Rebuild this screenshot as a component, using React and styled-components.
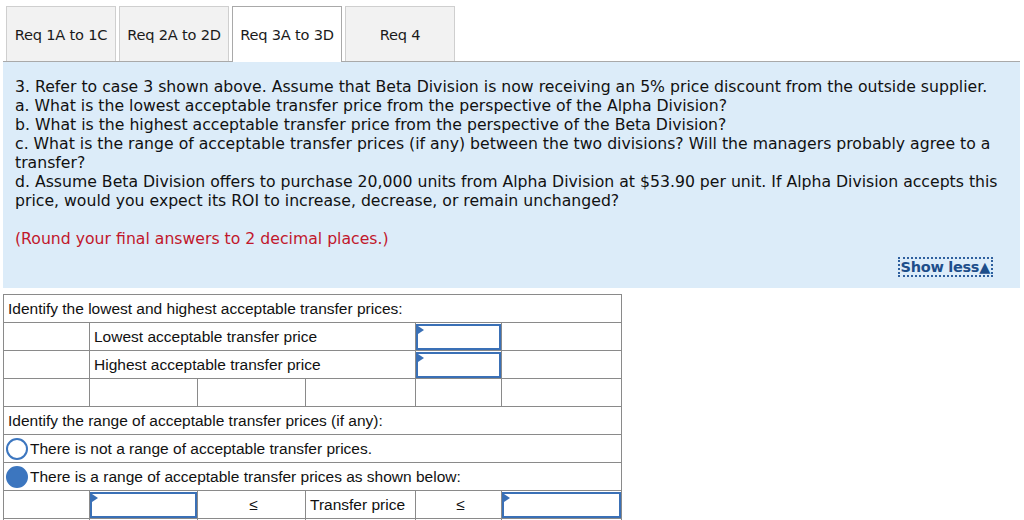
import React from "react";
import styled, { createGlobalStyle } from "styled-components";

const GlobalStyle = createGlobalStyle`
  body {
    margin: 0;
    background: #ffffff;
    font-family: "DejaVu Sans", Verdana, sans-serif;
    color: #111;
  }
`;

const Page = styled.div`
  padding: 6px 4px 0 3px;
`;

const TabBar = styled.div`
  display: flex;
  gap: 3px;
  padding-left: 3px;
  border-bottom: 1px solid #a9a9a9;
`;

const Tab = styled.div`
  width: 110px;
  box-sizing: border-box;
  display: flex;
  align-items: center;
  justify-content: center;
  font-size: 14.6px;
  letter-spacing: -0.2px;
  color: #1a1a1a;
  background: ${(props) => (props.active ? "#ffffff" : "#f2f2f2")};
  border: 1px solid ${(props) => (props.active ? "#a9a9a9" : "#cfcfcf")};
  border-bottom: none;
  margin-bottom: ${(props) => (props.active ? "-1px" : "0")};
  height: ${(props) => (props.active ? "56px" : "55px")};
`;

const Panel = styled.div`
  width: 1017px;
  box-sizing: border-box;
  background: #dcecf9;
  padding: 15px 27px 11px 12px;
  font-size: 15.7px;
  line-height: 19px;
`;

const Line = styled.div`
  white-space: nowrap;
`;

const Note = styled.div`
  margin-top: 19px;
  color: #c1172c;
`;

const ShowRow = styled.div`
  display: flex;
  justify-content: flex-end;
  margin-top: 9px;
`;

const ShowLess = styled.span`
  font-weight: bold;
  font-size: 14.5px;
  line-height: 16px;
  letter-spacing: -0.3px;
  color: #1d4e8a;
  border: 2px dotted #2e5f9e;
  padding: 0 1px;
`;

const Grid = styled.table`
  margin-top: 6px;
  border-collapse: collapse;
  table-layout: fixed;
  width: 618px;
  font-family: "Liberation Sans", Arial, sans-serif;
  font-size: 15.5px;
  line-height: 17px;
  color: #111;
`;

const Cell = styled.td`
  border: 1px solid #8a8a8a;
  height: 28px;
  padding: 0 0 0 4px;
  box-sizing: border-box;
  text-align: ${(props) => (props.center ? "center" : "left")};
  white-space: nowrap;
  overflow: hidden;
`;

const InputCell = styled.td`
  border: 1px solid #8a8a8a;
  height: 28px;
  padding: 0;
  box-sizing: border-box;
`;

const InputBox = styled.div`
  position: relative;
  height: 26px;
  box-sizing: border-box;
  border: 2px solid #3a70b6;
  background: #fff;
  &::before {
    content: "";
    position: absolute;
    left: 0;
    top: 0;
    border-top: 4px solid transparent;
    border-bottom: 4px solid transparent;
    border-left: 6px solid #3a70b6;
  }
`;

const RadioLine = styled.div`
  display: flex;
  align-items: center;
  gap: 2px;
  margin-left: -2px;
`;

const Radio = styled.span`
  width: 18px;
  height: 18px;
  border-radius: 50%;
  border: 2px solid #3c76bf;
  background: ${(props) => (props.checked ? "#3c76bf" : "#fff")};
  flex-shrink: 0;
`;

const Input = () => (
  <InputCell>
    <InputBox />
  </InputCell>
);

export default function App() {
  return (
    <Page>
      <GlobalStyle />
      <TabBar>
        <Tab>Req 1A to 1C</Tab>
        <Tab>Req 2A to 2D</Tab>
        <Tab active>Req 3A to 3D</Tab>
        <Tab>Req 4</Tab>
      </TabBar>
      <Panel>
        <Line>
          3. Refer to case 3 shown above. Assume that Beta Division is now receiving an 5% price
          discount from the outside supplier.
        </Line>
        <Line>a. What is the lowest acceptable transfer price from the perspective of the Alpha Division?</Line>
        <Line>b. What is the highest acceptable transfer price from the perspective of the Beta Division?</Line>
        <Line>
          c. What is the range of acceptable transfer prices (if any) between the two divisions? Will
          the managers probably agree to a
        </Line>
        <Line>transfer?</Line>
        <Line>
          d. Assume Beta Division offers to purchase 20,000 units from Alpha Division at $53.90 per
          unit. If Alpha Division accepts this
        </Line>
        <Line>price, would you expect its ROI to increase, decrease, or remain unchanged?</Line>
        <Note>(Round your final answers to 2 decimal places.)</Note>
        <ShowRow>
          <ShowLess>Show less▲</ShowLess>
        </ShowRow>
      </Panel>
      <Grid>
        <colgroup>
          <col style={{ width: 86 }} />
          <col style={{ width: 108 }} />
          <col style={{ width: 108 }} />
          <col style={{ width: 110 }} />
          <col style={{ width: 86 }} />
          <col style={{ width: 120 }} />
        </colgroup>
        <tbody>
          <tr>
            <Cell colSpan={6}>Identify the lowest and highest acceptable transfer prices:</Cell>
          </tr>
          <tr>
            <Cell />
            <Cell colSpan={3}>Lowest acceptable transfer price</Cell>
            <Input />
            <Cell />
          </tr>
          <tr>
            <Cell />
            <Cell colSpan={3}>Highest acceptable transfer price</Cell>
            <Input />
            <Cell />
          </tr>
          <tr>
            <Cell />
            <Cell />
            <Cell />
            <Cell />
            <Cell />
            <Cell />
          </tr>
          <tr>
            <Cell colSpan={6}>Identify the range of acceptable transfer prices (if any):</Cell>
          </tr>
          <tr>
            <Cell colSpan={6}>
              <RadioLine>
                <Radio />
                There is not a range of acceptable transfer prices.
              </RadioLine>
            </Cell>
          </tr>
          <tr>
            <Cell colSpan={6}>
              <RadioLine>
                <Radio checked />
                There is a range of acceptable transfer prices as shown below:
              </RadioLine>
            </Cell>
          </tr>
          <tr>
            <Cell />
            <Input />
            <Cell center>≤</Cell>
            <Cell>Transfer price</Cell>
            <Cell center>≤</Cell>
            <Input />
          </tr>
          <tr>
            <Cell />
            <Cell />
            <Cell />
            <Cell />
            <Cell />
            <Cell />
          </tr>
        </tbody>
      </Grid>
    </Page>
  );
}
